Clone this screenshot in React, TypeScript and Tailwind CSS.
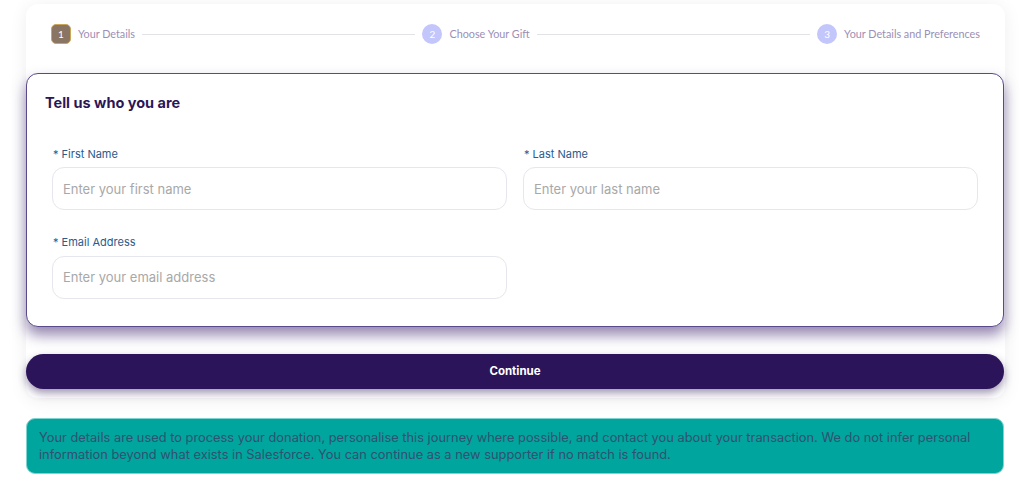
const body = "font-['Inter','Noto_Sans',sans-serif]";

function Step({ n, label, active }: { n: number; label: string; active?: boolean }) {
  return (
    <div className="flex items-center gap-[7px] shrink-0">
      {active ? (
        <span className="flex h-[20px] w-[20px] items-center justify-center rounded-[5px] border border-[#c9a65a] bg-[#8a7463] text-[10px] text-white">
          {n}
        </span>
      ) : (
        <span className="flex h-[20px] w-[20px] items-center justify-center rounded-full bg-[#c3c6fb] text-[10px] text-white">
          {n}
        </span>
      )}
      <span className="text-[10.8px] text-[#9b8fb5]">{label}</span>
    </div>
  );
}

function Field({ label, placeholder }: { label: string; placeholder: string }) {
  return (
    <div className="flex flex-col">
      <label className="mb-[5px] ml-[1px] text-[11px] text-[#2b5a8c]">* {label}</label>
      <input
        type="text"
        placeholder={placeholder}
        className="h-[43px] w-full rounded-[12px] border border-[#e6e6ee] bg-white px-[10px] text-[13px] text-[#333] placeholder:text-[#a8a8a8] outline-none"
      />
    </div>
  );
}

export default function App() {
  return (
    <div className={`min-h-[486px] bg-white px-[26px] pt-[4px] ${body}`}>
      <div className="w-[979px] rounded-[12px] bg-white pb-[9px] shadow-[0_2px_18px_rgba(0,0,0,0.07)]">
        <div className="flex h-[60px] items-center gap-[7px] px-[25px] font-['Lato',sans-serif]">
          <Step n={1} label="Your Details" active />
          <div className="h-px flex-1 bg-[#e2e2e6]" />
          <Step n={2} label="Choose Your Gift" />
          <div className="h-px flex-1 bg-[#e2e2e6]" />
          <Step n={3} label="Your Details and Preferences" />
        </div>

        <div className="mt-[9px] w-[978px] rounded-[12px] border border-[#5b4a8b] bg-white px-[18px] pt-[18px] pb-[27px] shadow-[0_8px_14px_rgba(60,35,110,0.55)]">
          <h2 className="text-[14.5px] font-bold text-[#2a1659]">Tell us who you are</h2>
          <div className="mt-[32px] grid grid-cols-2 gap-x-[16px] gap-y-[24px] px-[7px]">
            <Field label="First Name" placeholder="Enter your first name" />
            <Field label="Last Name" placeholder="Enter your last name" />
            <Field label="Email Address" placeholder="Enter your email address" />
          </div>
        </div>

        <button className="mt-[27px] h-[35px] w-[978px] rounded-full bg-[#2c145a] text-[11.5px] font-bold text-white shadow-[0_4px_8px_rgba(40,20,80,0.45)]">
          Continue
        </button>
      </div>

      <div className="mt-[20px] w-[978px] rounded-[9px] border border-[#7fd4cf] bg-[#00a59e] px-[12px] py-[10px] text-[12.85px] leading-[17px] text-[#32506f]">
        Your details are used to process your donation, personalise this journey where possible, and contact you about your
        transaction. We do not infer personal information beyond what exists in Salesforce. You can continue as a new supporter
        if no match is found.
      </div>
    </div>
  );
}
